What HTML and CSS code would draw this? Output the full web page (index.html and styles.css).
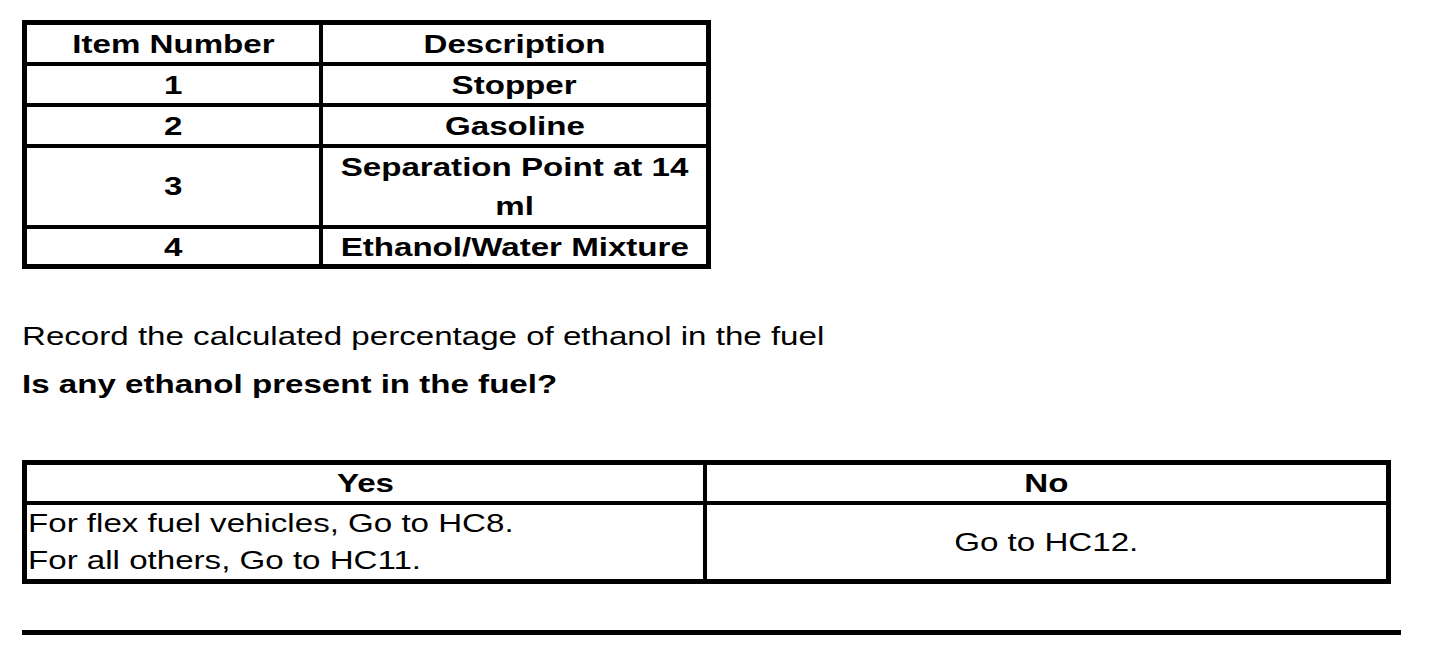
FILE: index.html
```html
<!DOCTYPE html>
<html lang="en">
<head>
<meta charset="utf-8">
<title>Ethanol test</title>
<link rel="stylesheet" href="styles.css">
</head>
<body>
<div class="page">
  <table class="items">
    <thead>
      <tr><th class="c1"><span class="sx">Item Number</span></th><th><span class="sx">Description</span></th></tr>
    </thead>
    <tbody>
      <tr><td class="c1"><span class="sx">1</span></td><td><span class="sx">Stopper</span></td></tr>
      <tr><td class="c1"><span class="sx">2</span></td><td><span class="sx">Gasoline</span></td></tr>
      <tr class="tall"><td class="c1"><span class="sx">3</span></td><td><span class="sx">Separation Point at 14<br>ml</span></td></tr>
      <tr class="last"><td class="c1"><span class="sx">4</span></td><td><span class="sx">Ethanol/Water Mixture</span></td></tr>
    </tbody>
  </table>

  <div class="notes">
    <p class="note"><span class="sx sx-l">Record the calculated percentage of ethanol in the fuel</span></p>
    <p class="note question"><span class="sx sx-l">Is any ethanol present in the fuel?</span></p>
  </div>

  <table class="choice">
    <thead>
      <tr><th class="c1"><span class="sx">Yes</span></th><th><span class="sx">No</span></th></tr>
    </thead>
    <tbody>
      <tr>
        <td class="c1 left"><span class="sx sx-l">For flex fuel vehicles, Go to HC8.<br>For all others, Go to HC11.</span></td>
        <td class="mid"><span class="sx">Go to HC12.</span></td>
      </tr>
    </tbody>
  </table>

  <hr class="rule">
</div>
</body>
</html>
```

FILE: styles.css
```css
html, body {
  margin: 0;
  padding: 0;
  background: #fff;
}

.page {
  padding: 20px 0 0 22px;
  font-family: "Liberation Sans", Arial, sans-serif;
  font-size: 26px;
  color: #000;
}

.sx {
  display: inline-block;
  vertical-align: top;
  transform: scaleX(1.273);
  transform-origin: center top;
  white-space: nowrap;
}

.sx-l {
  transform-origin: left top;
  text-align: left;
}

table {
  border-collapse: separate;
  border-spacing: 0;
  border: 5px solid #000;
  box-sizing: border-box;
  table-layout: fixed;
}

th, td {
  padding: 2px 0 0;
  text-align: center;
  font-weight: bold;
  border-bottom: 4px solid #000;
  line-height: 35px;
  box-sizing: border-box;
}

th.c1, td.c1 {
  border-right: 4px solid #000;
}

/* first table */
.items {
  width: 689px;
}

.items th.c1 {
  width: 296px;
}

.items tr.tall td {
  padding-top: 0;
  line-height: 38.5px;
}

.items tr.last td {
  border-bottom: 0;
  padding-top: 1px;
  line-height: 34px;
}

/* notes */
.notes {
  margin-top: 43px;
}

.note {
  margin: 0;
  line-height: 48px;
  height: 48px;
}

.question {
  font-weight: bold;
}

/* second table */
.choice {
  margin-top: 52px;
  width: 1369px;
}

.choice th {
  padding-top: 1px;
  line-height: 35px;
}

.choice th.c1 {
  width: 680px;
}

.choice tbody td {
  font-weight: normal;
  border-bottom: 0;
  padding-top: 0;
  line-height: 37px;
  vertical-align: middle;
}

.choice td.left {
  text-align: left;
  padding-left: 1px;
}

.rule {
  margin: 46px 0 0 0;
  width: 1379px;
  height: 5px;
  border: 0;
  background: #000;
}
```
